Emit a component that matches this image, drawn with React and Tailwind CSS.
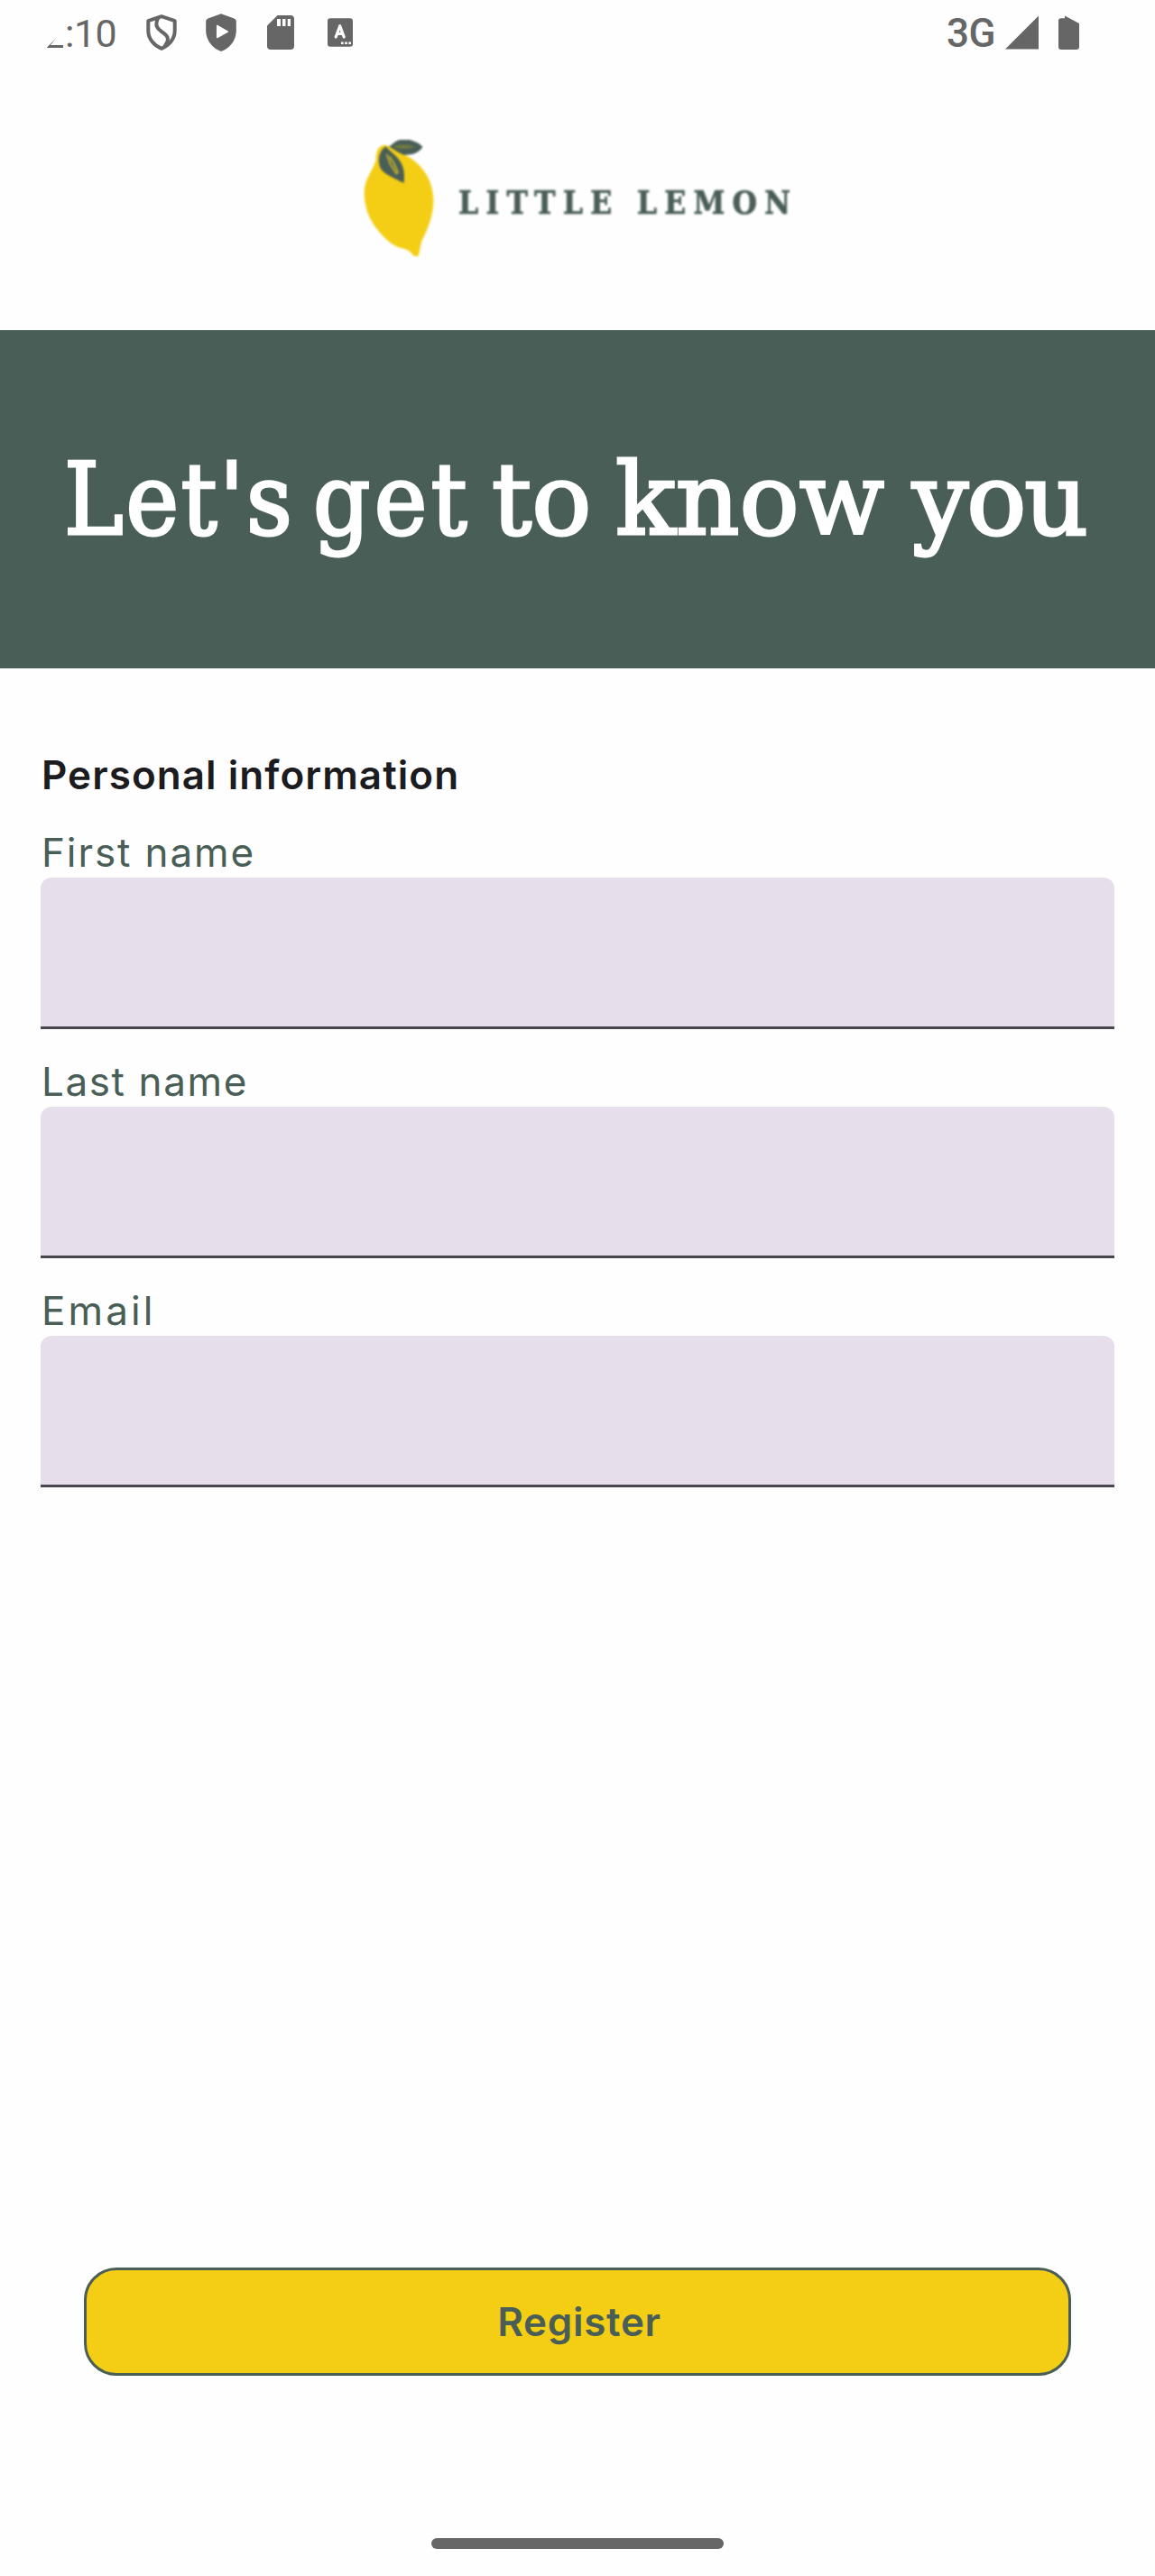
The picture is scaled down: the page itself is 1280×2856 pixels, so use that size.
import React from "react";

function StatusBar() {
  return (
    <div className="flex h-[72px] items-center pl-[52px] pr-[84px] font-[Roboto,sans-serif] text-[#666666]">
      <div className="flex w-[110px] items-center">
        <svg className="mt-px" width="18" height="32" viewBox="0 0 18 32" fill="currentColor">
          <path d="M0 31.5 L10 21.5 L3.8 29 H18 V32 H0 Z" />
        </svg>
        <span className="ml-[2px] pt-[2px] text-[43px] leading-[50px] tracking-[-0.5px]">:10</span>
      </div>
      <svg width="34" height="40" viewBox="0 0 34 40" fill="none" stroke="currentColor" strokeWidth="4" strokeLinejoin="round" strokeLinecap="round">
        <path d="M17 2.2 L31.7 7.2 V18 C31.7 27.5 25 34.5 17 37.8 C9 34.5 2.3 27.5 2.3 18 V7.2 Z" />
        <path d="M13 4.5 C9.5 12 12 15.5 17 19 C23 23 27 26.5 21 34.5" />
      </svg>
      <svg className="ml-[32px]" width="34" height="42" viewBox="0 0 34 42">
        <path fill="currentColor" d="M17 0.2 L31.5 5.4 Q33.8 6.3 33.8 8.6 V19 C33.8 30 26 39 17 41.9 C8 39 0.2 30 0.2 19 V8.6 Q0.2 6.3 2.5 5.4 Z" />
        <path fill="#fefefe" stroke="#fefefe" strokeWidth="1.5" strokeLinejoin="round" d="M12.7 13.5 L24.3 20.2 L12.7 26.5 Z" />
      </svg>
      <svg className="ml-[34px]" width="30" height="38" viewBox="0 0 30 38">
        <path fill="currentColor" d="M11.5 0 H26 Q30 0 30 4 V34 Q30 38 26 38 H4 Q0 38 0 34 V11.5 Z" />
        <path fill="#fefefe" d="M11 4 H15 V12 H11 Z M17 4 H20.5 V12 H17 Z M22.7 4 H26 V12 H22.7 Z" />
      </svg>
      <svg className="ml-[37px]" width="28" height="32" viewBox="0 0 28 32">
        <rect width="28" height="31.5" y="0.2" rx="3" fill="currentColor" />
        <path d="M9.2 21 L13.7 8.7 L18.2 21 M11 17.3 H16.5" fill="none" stroke="#fefefe" strokeWidth="3.2" strokeLinecap="round" strokeLinejoin="round" />
        <path fill="#fefefe" d="M15 26.5 h2.6 v2.6 h-2.6 Z M19.2 26.5 h2.6 v2.6 h-2.6 Z M23.4 26.5 h2.6 v2.6 h-2.6 Z" />
      </svg>
      <span className="ml-auto pt-[1px] text-[44px] font-medium leading-[50px] tracking-[-0.5px]">3G</span>
      <svg className="ml-[11px]" width="37" height="38" viewBox="0 0 37 38" fill="currentColor">
        <path d="M0 37.5 L37 0.5 V37.5 Z" />
      </svg>
      <svg className="ml-[22px]" width="23" height="38" viewBox="0 0 23 38" fill="currentColor">
        <path d="M7 0.5 L23 9 V35 Q23 38 20 38 H3 Q0 38 0 35 V6 Q0 3.2 3 3.2 H7 Z" />
      </svg>
    </div>
  );
}

function Logo() {
  return (
    <div className="flex h-[294px] items-center pl-[402px] blur-[0.8px]">
      <svg className="mt-[2px]" width="80" height="130" viewBox="36 45 240 390">
        <path fill="#f4ce14" d="M80 112 C79 90 86 64 106 63 C125 62 150 80 185 100 C240 132 270 185 271 245 C272 300 248 350 235 375 C227 392 226 415 221 432 H206 C195 415 183 408 160 404 C130 398 85 350 65 315 C48 285 41 250 41 220 C41 175 72 145 80 112 Z" />
        <path fill="#495e57" d="M124 68 C140 55 148 46 162 45 H192 C205 49 225 55 235 69 C222 90 200 96 172 95 C155 88 140 76 124 68 Z" />
        <path fill="#8b8a32" d="M138 68 C155 58 190 59 208 68 C190 77 160 78 138 68 Z" opacity=".6" />
        <path fill="#495e57" d="M113 67 C90 82 84 110 94 138 C105 160 140 172 173 189 C176 155 173 135 158 113 C145 95 128 86 113 67 Z" />
        <path fill="none" stroke="#d5bd22" strokeWidth="5" d="M116 93 L127 124 L149 160 M126 101 L140 124 L154 156" />
      </svg>
      <span className="ml-[26px] mt-[11px] whitespace-nowrap font-['DejaVu_Serif_Condensed','DejaVu_Serif',serif] text-[35px] font-bold leading-[40px] tracking-[8.3px] text-[#495e57] [-webkit-text-stroke:0.6px_#495e57]">
        LITTLE LEMON
      </span>
    </div>
  );
}

function Field({ label, spacing }) {
  return (
    <label className="block">
      <span className={`block pl-[1px] text-[44px] leading-[56px] text-[#495e57] ${spacing}`}>{label}</span>
      <input className="block h-[168px] w-full rounded-t-[12px] border-b-[3px] border-[#49454f] bg-[#e6dfeb] px-12 text-[44px] outline-none" />
    </label>
  );
}

export default function App() {
  return (
    <div className="flex h-[2856px] w-[1280px] flex-col overflow-hidden bg-[#fefefe] font-[Inter,sans-serif]">
      <StatusBar />
      <Logo />
      <h1 className="flex h-[375px] shrink-0 items-center whitespace-pre bg-[#495e57] pl-[71px] font-['DejaVu_Serif_Condensed','DejaVu_Serif',serif] text-[110px] leading-[140px] text-white [-webkit-text-stroke:3px_white]">
        <span className="w-[276px] tracking-[2.7px]">{"Let's "}</span>
        <span className="w-[198px] tracking-[4.5px]">{"get "}</span>
        <span className="w-[137px] font-['DejaVu_Serif',serif] tracking-[0px]">{"to "}</span>
        <span className="w-[329px] font-['DejaVu_Serif',serif] tracking-[0px]">{"know "}</span>
        <span className="font-['DejaVu_Serif',serif] tracking-[-2px]">you</span>
      </h1>
      <form className="flex grow flex-col px-[45px] pt-[86px]">
        <h2 className="pl-[1px] text-[44px] font-semibold leading-[64px] tracking-[1.05px] text-[#1c1b1f]">Personal information</h2>
        <div className="mt-[26px] flex flex-col gap-[30px]">
          <Field label="First name" spacing="tracking-[1.9px]" />
          <Field label="Last name" spacing="tracking-[1.6px]" />
          <Field label="Email" spacing="tracking-[3.1px]" />
        </div>
        <button type="button" className="mx-[48px] mb-[180px] mt-auto h-[120px] rounded-[36px] border-[3px] border-[#495e57] bg-[#f4ce14] pl-[4px] text-[44px] font-semibold tracking-[0.7px] text-[#495e57]">
          Register
        </button>
      </form>
      <div className="mx-auto mb-[30px] h-[12px] w-[324px] shrink-0 rounded-full bg-[#666666]" />
    </div>
  );
}
